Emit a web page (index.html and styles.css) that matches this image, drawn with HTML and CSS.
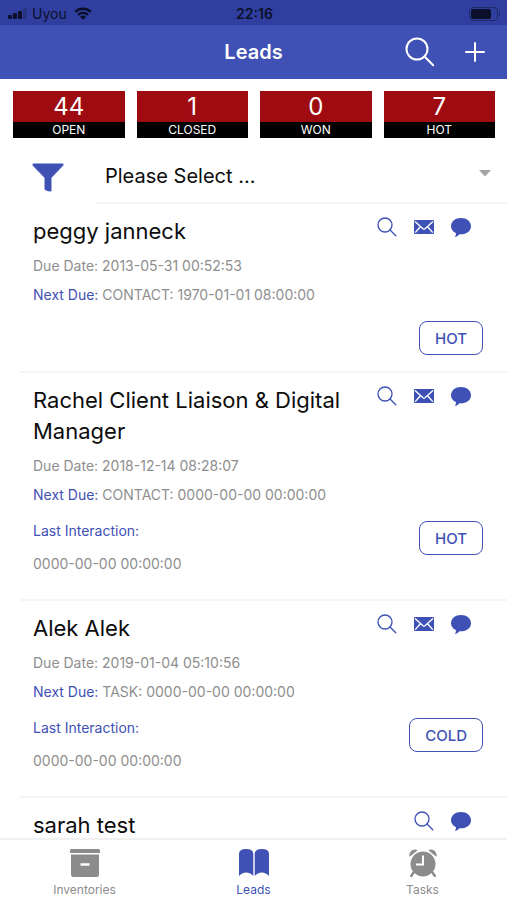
FILE: index.html
```html
<!DOCTYPE html>
<html lang="en">
<head>
<meta charset="utf-8">
<meta name="viewport" content="width=device-width, initial-scale=1">
<title>Leads</title>
<link rel="stylesheet" href="styles.css">
</head>
<body>
<svg class="sprite" aria-hidden="true">
  <symbol id="i-search" viewBox="0 0 30 30"><circle cx="12" cy="12" r="10.5"/><path d="M19.500 19.500L28.200 28.200"/></symbol>
  <symbol id="i-mail" viewBox="0 0 20 14"><rect width="20" height="14" rx="1" fill="currentColor"/><path d="M1 1.500L9 8.700Q10 9.500 11 8.700L19 1.500M1.200 12.600L6.400 6.800M18.800 12.600L13.600 6.800" fill="none" stroke="#fff" stroke-width="1.400"/></symbol>
  <symbol id="i-chat" viewBox="0 0 20 19"><path d="M10 0C15.600 0 20 3.500 20 8.200S15.600 16.300 10 16.300C9.500 16.300 9 16.300 8.600 16.200C7.200 17.800 5.600 18.700 4 18.900C4.800 17.600 5.100 16.400 4.900 15.100C2 13.800 0 11.300 0 8.200C0 3.500 4.400 0 10 0Z" fill="currentColor"/></symbol>
</svg>
<div class="app">
  <div class="status">
    <div class="status-side">
      <svg width="19" height="12" viewBox="0 0 19 12" aria-hidden="true"><rect x="0" y="7" width="4" height="4" rx="1"/><rect x="5" y="5" width="4" height="6" rx="1"/><rect x="10" y="3" width="4" height="8" rx="1"/><rect x="15" y="0" width="4" height="11" rx="1" opacity=".2"/></svg>
      <span>Uyou</span>
      <svg class="wifi" width="18" height="13" viewBox="0 0 18 13" aria-hidden="true"><path d="M1.200 4.800C5.600 .7 12.400 .7 16.800 4.800M4 7.900C6.900 5.300 11.100 5.300 14 7.900" fill="none" stroke="#0b0f2a" stroke-width="2.400"/><path d="M6 9.700C7.800 8.200 10.200 8.200 12 9.700L9 12.700Z"/></svg>
    </div>
    <span class="clock">22:16</span>
    <div class="status-side end">
      <svg width="32" height="14" viewBox="0 0 32 14" aria-hidden="true"><rect x=".5" y=".5" width="28" height="13" rx="3.500" fill="none" stroke="#1e2867"/><rect x="2" y="2" width="20" height="10" rx="2"/><path d="M30 4.500Q32 7 30 9.500Z" fill="#1e2867"/></svg>
    </div>
  </div>
  <header class="bar">
    <h1>Leads</h1>
    <div class="actions">
      <button type="button" aria-label="Search"><svg class="line" width="30" height="30"><use href="#i-search"/></svg></button>
      <button type="button" aria-label="Add"><svg class="line" width="20" height="20" viewBox="0 0 20 20"><path d="M10 1V19M1 10H19"/></svg></button>
    </div>
  </header>
  <main>
    <section class="stats" aria-label="Totals">
      <div class="stat"><strong>44</strong><span>OPEN</span></div>
      <div class="stat"><strong>1</strong><span>CLOSED</span></div>
      <div class="stat"><strong>0</strong><span>WON</span></div>
      <div class="stat"><strong>7</strong><span>HOT</span></div>
    </section>
    <div class="filter">
      <label for="filter" aria-label="Filter leads"><svg width="32" height="29" viewBox="0 0 32 29" aria-hidden="true"><path d="M1.500 .5H30.500Q32 .5 31.500 2.200L19.500 14.800V27Q19.500 29 17.500 28.500L14 27.600Q12.500 27.200 12.500 25.500V14.800L.6 2.400Q0 .5 1.500 .5Z" fill="currentColor"/></svg></label>
      <div class="select">
        <select id="filter"><option>Please Select ...</option></select>
        <svg width="12" height="7" viewBox="0 0 12 7" aria-hidden="true"><path d="M0 0H12L6 6.500Z" fill="#a3a3a3"/></svg>
      </div>
    </div>
    <ul class="leads">
      <li>
        <div class="head"><h2>peggy janneck</h2><div class="tools">
          <button type="button" aria-label="View"><svg class="line" width="20" height="20"><use href="#i-search"/></svg></button>
          <button type="button" aria-label="Email"><svg width="20" height="14"><use href="#i-mail"/></svg></button>
          <button type="button" aria-label="Message"><svg width="20" height="19"><use href="#i-chat"/></svg></button></div></div>
        <p>Due Date: 2013-05-31 00:52:53</p>
        <p><b>Next Due:</b> CONTACT: 1970-01-01 08:00:00</p>
        <div class="foot"><button type="button" class="tag">HOT</button></div>
      </li>
      <li>
        <div class="head"><h2>Rachel Client Liaison &amp; Digital Manager</h2><div class="tools">
          <button type="button" aria-label="View"><svg class="line" width="20" height="20"><use href="#i-search"/></svg></button>
          <button type="button" aria-label="Email"><svg width="20" height="14"><use href="#i-mail"/></svg></button>
          <button type="button" aria-label="Message"><svg width="20" height="19"><use href="#i-chat"/></svg></button></div></div>
        <p>Due Date: 2018-12-14 08:28:07</p>
        <p><b>Next Due:</b> CONTACT: 0000-00-00 00:00:00</p>
        <div class="foot"><div class="last"><b>Last Interaction:</b><span>0000-00-00 00:00:00</span></div><button type="button" class="tag">HOT</button></div>
      </li>
      <li>
        <div class="head"><h2>Alek Alek</h2><div class="tools">
          <button type="button" aria-label="View"><svg class="line" width="20" height="20"><use href="#i-search"/></svg></button>
          <button type="button" aria-label="Email"><svg width="20" height="14"><use href="#i-mail"/></svg></button>
          <button type="button" aria-label="Message"><svg width="20" height="19"><use href="#i-chat"/></svg></button></div></div>
        <p>Due Date: 2019-01-04 05:10:56</p>
        <p><b>Next Due:</b> TASK: 0000-00-00 00:00:00</p>
        <div class="foot"><div class="last"><b>Last Interaction:</b><span>0000-00-00 00:00:00</span></div><button type="button" class="tag">COLD</button></div>
      </li>
      <li>
        <div class="head"><h2>sarah test</h2><div class="tools">
          <button type="button" aria-label="View"><svg class="line" width="20" height="20"><use href="#i-search"/></svg></button>
          <button type="button" aria-label="Message"><svg width="20" height="19"><use href="#i-chat"/></svg></button></div></div>
      </li>
    </ul>
  </main>
  <nav class="tabs">
    <a href="#inventories"><svg width="30" height="28" viewBox="0 0 30 28" aria-hidden="true"><path d="M1.500 0H28.500Q30 0 30 1.500V4H0V1.500Q0 0 1.500 0Z"/><path fill-rule="evenodd" d="M1 5.500H29V26Q29 28 27 28H3Q1 28 1 26ZM10.500 14.200V16.700H19.500V14.200Z"/></svg><span>Inventories</span></a>
    <a href="#leads" class="on" aria-current="page"><svg width="32" height="28" viewBox="0 0 32 28" aria-hidden="true"><path d="M1 5Q1 0 8 0Q15.300 0 15.300 5V27Q12.500 23.500 8 23.500Q4 23.500 1 27Z"/><path d="M16.700 5Q16.700 0 24 0Q31 0 31 5V27Q28 23.500 24 23.500Q19.500 23.500 16.700 27Z"/></svg><span>Leads</span></a>
    <a href="#tasks"><svg width="28" height="28" viewBox="0 0 28 28" aria-hidden="true"><path d="M.6 7.800C-.8 3.500 4-1.500 8.700 1.200ZM27.400 7.800C28.800 3.500 24-1.500 19.300 1.200Z"/><circle cx="14" cy="15" r="12.500"/><path d="M4.500 23.500L2.200 27M23.500 23.500L25.800 27" stroke="currentColor" stroke-width="2.400" stroke-linecap="round"/><path d="M14 6.500V15.500H7" fill="none" stroke="#fff" stroke-width="2"/></svg><span>Tasks</span></a>
  </nav>
</div>
</body>
</html>
```
FILE: styles.css
```css
* { box-sizing: border-box; }
body { margin: 0; background: #fff; color: #0c0c0c; font-family: Inter, "Liberation Sans", sans-serif; }
h1, h2, p, ul { margin: 0; padding: 0; }
svg { display: block; flex: none; }
button { border: 0; padding: 0; background: none; color: inherit; font: inherit; }
.sprite { display: none; }
.app { display: flex; flex-direction: column; height: 100vh; overflow: hidden; }

.status { display: grid; grid-template-columns: 1fr auto 1fr; align-items: center; height: 25px; padding: 2px 6px 0 8px; background: #303f9f; color: #0b0f2a; font-size: 14px; flex: none; }
.status svg { fill: #0b0f2a; }
.status-side { display: flex; align-items: center; gap: 5px; }
.status-side .wifi { margin-left: 2px; }
.end { justify-content: flex-end; }
.clock { font-weight: 600; }

.bar { display: grid; grid-template-columns: 1fr auto 1fr; align-items: center; height: 54px; padding: 0 22px; background: #3f51b5; color: #fff; flex: none; }
.bar h1 { grid-column: 2; font-size: 20px; font-weight: 600; }
.actions { display: flex; align-items: center; justify-content: flex-end; gap: 30px; }
.line { fill: none; stroke: currentColor; stroke-width: 2; stroke-linecap: round; }

main { flex: 1; min-height: 0; overflow-y: auto; scrollbar-width: none; }
.stats { display: grid; grid-template-columns: repeat(4, 1fr); gap: 12px; padding: 12px 12px 0 13px; }
.stat { display: flex; flex-direction: column; text-align: center; color: #fff; background: #000; }
.stat strong { background: #9e0b11; font-size: 24px; font-weight: 400; line-height: 31px; }
.stat span { font-size: 12px; line-height: 16px; }

.filter { display: flex; align-items: center; height: 66px; }
.filter label { width: 96px; padding: 13px 0 0 32px; color: #3f51b5; align-self: stretch; display: flex; align-items: center; }
.select { flex: 1; display: flex; align-items: center; align-self: stretch; padding: 11px 16px 0 9px; border-bottom: 2px solid #f5f5f5; }
.select svg { margin-bottom: 4px; }
.select select { flex: 1; height: 48px; border: 0; padding: 0; appearance: none; background: none; color: inherit; font-family: inherit; font-size: 20px; }

.leads { list-style: none; padding-left: 20px; }
.leads li { padding: 12px 24px 16px 13px; border-bottom: 2px solid #f5f5f5; }
.head { display: flex; justify-content: space-between; align-items: flex-start; margin-bottom: 9px; }
.head h2 { font-size: 22px; font-weight: 400; line-height: 31px; }
.tools { display: flex; flex: none; margin-right: 4px; color: #3f51b5; }
.tools button { display: flex; align-items: center; justify-content: center; width: 37px; height: 22px; }
.leads p { font-size: 14px; line-height: 20px; margin-bottom: 9px; color: #8e8e8e; }
.leads b { font-weight: 400; color: #3f51b5; }
.foot { display: flex; align-items: flex-start; margin-top: 16px; }
.last { display: flex; flex-direction: column; gap: 13px; padding-bottom: 9px; font-size: 14px; line-height: 20px; color: #8e8e8e; }
.tag { margin-left: auto; height: 34px; padding: 0 15px; border: 1px solid #3f51b5; border-radius: 8px; color: #3f51b5; font-size: 15px; font-weight: 500; }

.tabs { display: grid; grid-template-columns: repeat(3, 1fr); height: 62px; border-top: 2px solid #f0f0f0; background: #fff; flex: none; }
.tabs a { display: flex; flex-direction: column; align-items: center; gap: 5px; padding-top: 9px; color: #8c8c8c; font-size: 12px; line-height: 16px; text-decoration: none; }
.tabs svg { fill: currentColor; }
.tabs .on { color: #3f51b5; }
```
